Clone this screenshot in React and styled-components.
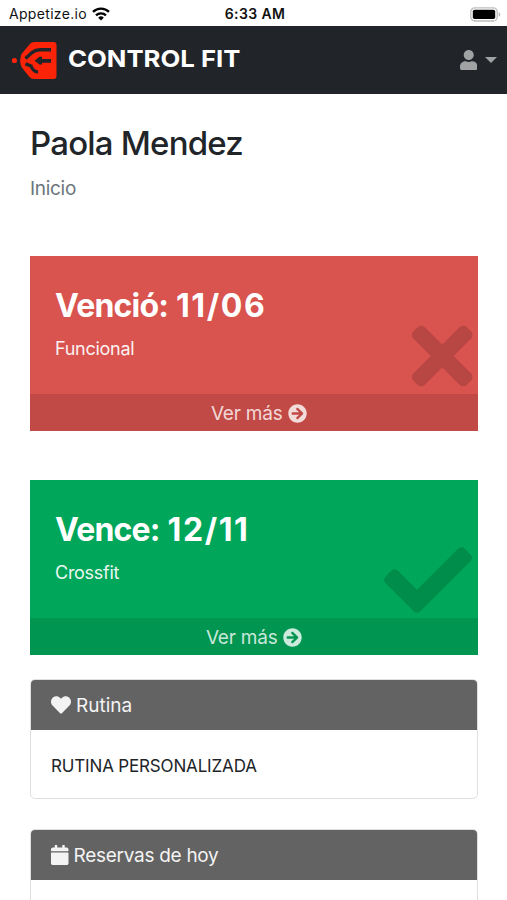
import React from 'react';
import styled, { createGlobalStyle } from 'styled-components';
import {
  FaArrowCircleRight,
  FaCalendar,
  FaCheck,
  FaHeart,
  FaTimes,
  FaUser,
} from 'react-icons/fa';

const GlobalStyle = createGlobalStyle`
  * {
    box-sizing: border-box;
  }

  body {
    margin: 0;
    background: #fff;
    color: #212529;
    font-family: Inter, "Liberation Sans", sans-serif;
  }

  svg {
    display: block;
  }
`;

const Screen = styled.div`
  height: 900px;
  overflow: hidden;
`;

const StatusBar = styled.div`
  display: grid;
  grid-template-columns: 1fr auto 1fr;
  align-items: center;
  height: 26px;
  padding: 2px 6px 0 9px;
  color: #111;
  font-size: 14px;
  line-height: 20px;
`;

const Carrier = styled.div`
  display: flex;
  align-items: center;
  gap: 5px;
  letter-spacing: 0.32px;
`;

const Clock = styled.div`
  font-weight: 600;
  letter-spacing: 0.4px;
`;

const BatterySlot = styled.div`
  justify-self: end;
`;

const Navbar = styled.nav`
  display: flex;
  align-items: center;
  height: 68px;
  padding: 0 10px 0 11px;
  background: #212529;
`;

const Brand = styled.div`
  flex: 1;
  padding: 0 0 3px 10px;
  color: #fff;
  font-size: 23.5px;
  font-weight: 700;
  line-height: 30px;
  white-space: nowrap;
  transform: scaleX(1.095);
  transform-origin: left;
`;

const UserMenu = styled.div`
  display: flex;
  align-items: center;
  gap: 8px;
  color: #a0a2a4;
  font-size: 20px;

  svg {
    width: 0.875em;
  }
`;

const Caret = styled.span`
  border: 6px solid transparent;
  border-top-color: currentColor;
  border-bottom: 0;
`;

const Content = styled.main`
  padding: 29px 29.5px 0 30px;
`;

const UserName = styled.h1`
  margin: 0;
  font-size: 33px;
  font-weight: 500;
  line-height: 40px;
  letter-spacing: -0.8px;
`;

const Breadcrumb = styled.div`
  margin: 12px 0 53px;
  color: #6c757d;
  font-size: 19px;
  line-height: 28px;
  letter-spacing: -0.3px;
`;

const Membership = styled.section`
  position: relative;
  height: 175px;
  margin-bottom: ${({ $gap }) => $gap}px;
  display: flex;
  flex-direction: column;
  background: ${({ $color }) => $color};
  color: #fff;
`;

const MembershipBody = styled.div`
  flex: 1;
  padding: 30px 25px 0;
`;

const DueDate = styled.h3`
  margin: 0;
  font-size: 32px;
  font-weight: 700;
  line-height: 40px;
  letter-spacing: -0.8px;
`;

const DateValue = styled.span`
  margin-left: 1px;
  letter-spacing: 1.6px;
`;

const Activity = styled.p`
  margin: 10px 0 0;
  font-size: 18px;
  line-height: 26px;
  letter-spacing: -0.27px;
  opacity: 0.92;
`;

const Mark = styled.div`
  position: absolute;
  right: ${({ $right }) => $right}px;
  top: 56px;
  color: rgba(0, 0, 0, 0.15);
  font-size: 88px;

  svg {
    width: ${({ $width }) => $width}em;
  }
`;

const MoreLink = styled.a`
  display: flex;
  align-items: center;
  justify-content: center;
  gap: 5px;
  height: 37px;
  padding: 1px 0 0 ${({ $indent }) => $indent || 0}px;
  background: rgba(0, 0, 0, 0.1);
  color: rgba(255, 255, 255, 0.8);
  font-size: 19px;
  letter-spacing: -0.2px;
`;

const Card = styled.section`
  height: 120px;
  margin-bottom: 30px;
  border: 1px solid #dfdfdf;
  border-radius: 5px;
  overflow: hidden;
`;

const CardHeader = styled.header`
  display: flex;
  align-items: center;
  gap: 5px;
  height: 50px;
  padding-left: 20px;
  background: #636363;
  color: #f3f3f3;
  font-size: 19px;
  letter-spacing: ${({ $tracking }) => $tracking || 0}px;

  svg {
    width: ${({ $iconWidth }) => $iconWidth}em;
    font-size: 20px;
  }
`;

const CardBody = styled.div`
  padding: 22px 20px;
  font-size: 17px;
  line-height: 28px;
  letter-spacing: -0.16px;
`;

const WifiIcon = () => (
  <svg width="18" height="14" viewBox="0 0 18 14">
    <g fill="none" stroke="#000" strokeWidth="2.3">
      <path d="M1 4.9a11.5 11.5 0 0 1 16 0" />
      <path d="M4 8.3a7.2 7.2 0 0 1 10 0" />
    </g>
    <path d="M9 13.6l-2.8-2.9a4 4 0 0 1 5.6 0z" />
  </svg>
);

const BatteryIcon = () => (
  <svg width="31" height="15" viewBox="0 0 31 15">
    <rect x="0.8" y="0.8" width="26.4" height="13.2" rx="4" fill="#fff" stroke="#bdbdbd" strokeWidth="1.3" />
    <rect x="2.8" y="2.8" width="22.4" height="9.2" rx="1.8" />
    <path d="M28.7 5v4.8a2.6 2.6 0 0 0 0-4.8z" fill="#bdbdbd" />
  </svg>
);

const Logo = () => (
  <svg width="46" height="38" viewBox="0 0 46 38">
    <circle cx="3.4" cy="19.5" r="2.6" fill="#fb2409" />
    <path
      d="M23 1H42.5Q45.5 1 45.5 4V35Q45.5 38 42.5 38H23Q20 38 18 35.5L10.5 26Q8 19.5 10.5 13L18 4Q20 1 23 1Z"
      fill="#fb2409"
    />
    <g fill="none" stroke="#212529" strokeWidth="3.4">
      <path d="M40 8.8H29Q25 8.8 21 11.5L14.5 17.5" />
      <path d="M14.5 22.8L20 25Q22 30.5 27 31" />
    </g>
    <path d="M23.5 19.8L28.5 15.8H31V18H40V21.8H31V23.6H28.5Z" fill="#212529" />
  </svg>
);

const App = () => (
  <>
    <GlobalStyle />
    <Screen>
      <StatusBar>
        <Carrier>
          Appetize.io
          <WifiIcon />
        </Carrier>
        <Clock>6:33 AM</Clock>
        <BatterySlot>
          <BatteryIcon />
        </BatterySlot>
      </StatusBar>
      <Navbar>
        <Logo />
        <Brand>CONTROL FIT</Brand>
        <UserMenu>
          <FaUser />
          <Caret />
        </UserMenu>
      </Navbar>
      <Content>
        <UserName>Paola Mendez</UserName>
        <Breadcrumb>Inicio</Breadcrumb>
        <Membership $color="#d9534f" $gap={49}>
          <MembershipBody>
            <DueDate>
              Venció: <DateValue>11/06</DateValue>
            </DueDate>
            <Activity>Funcional</Activity>
          </MembershipBody>
          <Mark $right={5} $width={0.6875}>
            <FaTimes />
          </Mark>
          <MoreLink $indent={10}>
            Ver más <FaArrowCircleRight />
          </MoreLink>
        </Membership>
        <Membership $color="#00a65a" $gap={24}>
          <MembershipBody>
            <DueDate>
              Vence: <DateValue>12/11</DateValue>
            </DueDate>
            <Activity>Crossfit</Activity>
          </MembershipBody>
          <Mark $right={6} $width={1}>
            <FaCheck />
          </Mark>
          <MoreLink>
            Ver más <FaArrowCircleRight />
          </MoreLink>
        </Membership>
        <Card>
          <CardHeader $iconWidth={1}>
            <FaHeart />
            Rutina
          </CardHeader>
          <CardBody>RUTINA PERSONALIZADA</CardBody>
        </Card>
        <Card>
          <CardHeader $iconWidth={0.875} $tracking={-0.28}>
            <FaCalendar />
            Reservas de hoy
          </CardHeader>
          <CardBody />
        </Card>
      </Content>
    </Screen>
  </>
);

export default App;
